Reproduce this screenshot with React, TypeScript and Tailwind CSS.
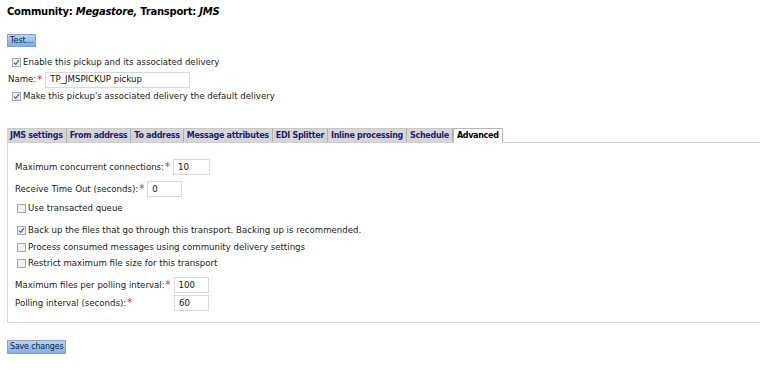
import React from 'react'

const FONT = { fontFamily: '"DejaVu Sans", Verdana, sans-serif' }

const TABS = [
  'JMS settings',
  'From address',
  'To address',
  'Message attributes',
  'EDI Splitter',
  'Inline processing',
  'Schedule',
  'Advanced',
]

function Check({ checked }: { checked?: boolean }) {
  return (
    <span className="inline-flex w-[9px] h-[9px] border border-[#a8a8a8] bg-[#f0f0f0] items-center justify-center shrink-0">
      {checked && (
        <svg width="7" height="7" viewBox="0 0 7 7" aria-hidden="true">
          <path d="M1 3.6 L2.8 5.4 L6 1.2" stroke="#4a5a8a" strokeWidth="1.2" fill="none" />
        </svg>
      )}
    </span>
  )
}

function Req() {
  return <span className="text-[#e02020] text-[10px] leading-none ml-[1px] mr-[3px]">*</span>
}

function Field({ value, w }: { value: string; w: string }) {
  return (
    <span className={`inline-flex items-center h-[16px] border border-[#d8d8d8] bg-white pl-[4px] text-[8.6px] text-[#111] ${w}`}>
      {value}
    </span>
  )
}

function CheckRow({ label, checked, className }: { label: string; checked?: boolean; className?: string }) {
  return (
    <div className={`flex items-center gap-[2px] h-[12px] ${className ?? ''}`}>
      <Check checked={checked} />
      <span>{label}</span>
    </div>
  )
}

export default function App() {
  return (
    <div className="w-[760px] h-[373px] bg-white text-[8.6px] text-[#1a1a1a] overflow-hidden" style={FONT}>
      <div className="pl-[7px] pt-[5px]">
        <h1 className="text-[10px] font-bold leading-[14px] text-black tracking-[-0.25px]">
          Community: <i>Megastore,</i> Transport: <i>JMS</i>
        </h1>

        <button className="mt-[15px] h-[13px] px-[2px] text-[8px] leading-none text-[#1a1a3a] bg-gradient-to-b from-[#b8d4f6] to-[#80aee6] border border-[#7ea4d4]">
          Test...
        </button>

        <CheckRow className="mt-[9px] ml-[5px]" checked label="Enable this pickup and its associated delivery" />

        <div className="flex items-center mt-[3px] ml-[1px] h-[17px]">
          <span>Name:</span>
          <Req />
          <Field value="TP_JMSPICKUP pickup" w="w-[145px]" />
        </div>

        <CheckRow className="mt-[2px] ml-[5px]" checked label="Make this pickup's associated delivery the default delivery" />

        <div className="mt-[26px] flex items-end border-b border-[#cfcfcf]">
          {TABS.map((t) => {
            const active = t === 'Advanced'
            return (
              <div
                key={t}
                className={
                  active
                    ? 'h-[15px] px-[3px] flex items-center font-bold text-[8px] tracking-[-0.3px] text-black bg-white border border-[#b8b8b8] border-b-white -mb-px'
                    : 'h-[14px] px-[3px] flex items-center font-bold text-[8px] tracking-[-0.3px] text-[#1f2466] bg-[#d6d6d6] border-r border-[#b0b0b0] border-t border-t-[#c8c8c8]'
                }
              >
                {t}
              </div>
            )
          })}
        </div>

        <div className="border-l border-b border-[#d8d8d8] h-[180px] pl-[7px] pt-[16px]">
          <div className="flex items-center h-[16px]">
            <span>Maximum concurrent connections:</span>
            <Req />
            <Field value="10" w="w-[37px]" />
          </div>
          <div className="flex items-center h-[16px] mt-[6px]">
            <span>Receive Time Out (seconds):</span>
            <Req />
            <Field value="0" w="w-[35px]" />
          </div>
          <CheckRow className="mt-[5px] ml-[2px]" label="Use transacted queue" />
          <CheckRow className="mt-[10px] ml-[2px]" checked label="Back up the files that go through this transport. Backing up is recommended." />
          <CheckRow className="mt-[5px] ml-[2px]" label="Process consumed messages using community delivery settings" />
          <CheckRow className="mt-[4px] ml-[2px]" label="Restrict maximum file size for this transport" />
          <div className="flex items-center h-[16px] mt-[8px]">
            <span>Maximum files per polling interval:</span>
            <Req />
            <Field value="100" w="w-[35px]" />
          </div>
          <div className="flex items-center h-[16px] mt-[2px]">
            <span className="w-[159px] flex items-center">
              Polling interval (seconds):
              <Req />
            </span>
            <Field value="60" w="w-[35px]" />
          </div>
        </div>

        <button className="mt-[17px] h-[14px] px-[2px] text-[8px] leading-none tracking-[-0.2px] text-[#1a1a3a] bg-gradient-to-b from-[#b8d4f6] to-[#80aee6] border border-[#7ea4d4]">
          Save changes
        </button>
      </div>
    </div>
  )
}
